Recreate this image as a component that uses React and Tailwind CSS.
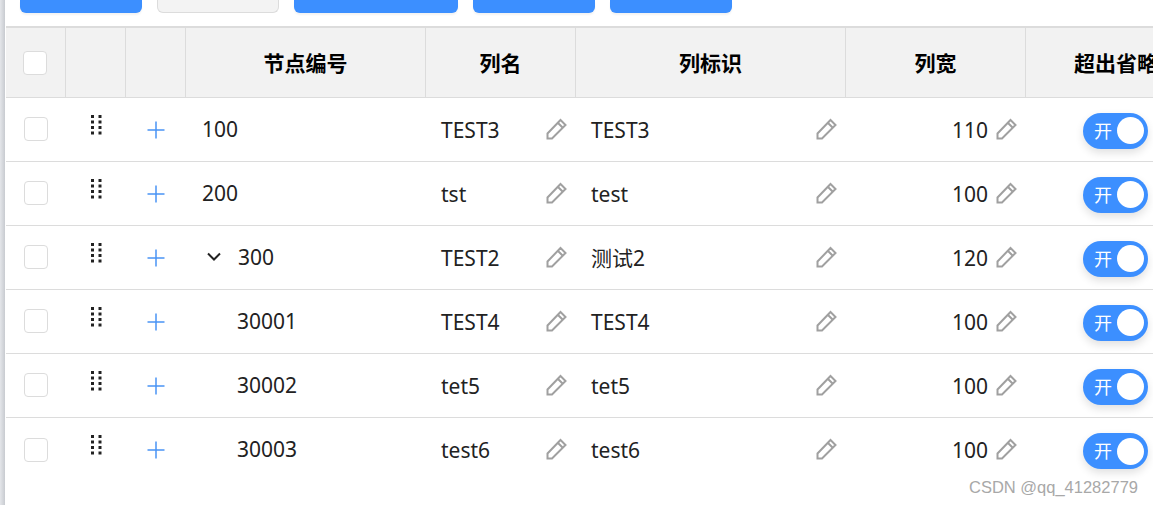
import React from "react";

const fontStack = "font-['Noto_Sans','Noto_Sans_CJK_SC',sans-serif]";

const rows = [
  { id: "100", name: "TEST3", key: "TEST3", width: "110" },
  { id: "200", name: "tst", key: "test", width: "100" },
  { id: "300", name: "TEST2", key: "测试2", width: "120", open: true },
  { id: "30001", name: "TEST4", key: "TEST4", width: "100", child: true },
  { id: "30002", name: "tet5", key: "tet5", width: "100", child: true },
  { id: "30003", name: "test6", key: "test6", width: "100", child: true, last: true },
];

const gridCols = "grid grid-cols-[60px_60px_60px_240px_150px_270px_180px_180px] w-[1200px]";

function Pencil() {
  return (
    <svg width="21" height="22" viewBox="0 0 21 22" fill="none" stroke="#a0a0a0" strokeWidth="2" className="shrink-0 mb-[2px]">
      <path d="M1.5 15.5L14.5 2L19.5 7L6 20.5H1.5Z" />
      <path d="M12 5L16.8 9.8" />
    </svg>
  );
}

function DragDots() {
  return (
    <svg width="12" height="20" viewBox="0 0 12 20" fill="#222">
      {[0, 5.5, 11, 16.5].map((y) => (
        <g key={y}>
          <rect x="1" y={y} width="3" height="3" />
          <rect x="8.5" y={y} width="3" height="3" />
        </g>
      ))}
    </svg>
  );
}

function Plus() {
  return (
    <svg width="18" height="18" viewBox="0 0 18 18" stroke="#4a94f5" strokeWidth="1.5">
      <path d="M0.5 9H17.5M9 0.5V17.5" />
    </svg>
  );
}

function Chevron() {
  return (
    <svg width="16" height="10" viewBox="0 0 16 10" fill="none" stroke="#222" strokeWidth="2">
      <path d="M2 1.5L8 7.5L14 1.5" />
    </svg>
  );
}

function Toggle() {
  return (
    <div className="flex items-center justify-between w-[65px] h-[36px] mt-[2px] rounded-full bg-[#3c8fff] pl-[11px] pr-[4px] shadow-[0_4px_8px_rgba(0,0,0,0.12)]">
      <span className="text-white text-[18px] leading-none">开</span>
      <span className="w-[27px] h-[27px] rounded-full bg-white" />
    </div>
  );
}

function Row({ row }) {
  return (
    <div className={`${gridCols} h-[64px] ${row.last ? "" : "border-b border-[#dcdcdc]"}`}>
      <div className="flex items-center pl-[18px]">
        <div className="w-[24px] h-[24px] mb-[1px] rounded-[4px] border border-[#dcdcdc] bg-white" />
      </div>
      <div className="flex justify-center pt-[17px]">
        <DragDots />
      </div>
      <div className="flex justify-center items-center">
        <Plus />
      </div>
      <div className="flex items-center pl-[16px] text-[21px] text-[#222]">
        {row.open && (
          <span className="ml-[4px] mr-[16px] mb-[2px] flex">
            <Chevron />
          </span>
        )}
        <span className={row.child ? "ml-[35px]" : ""}>{row.id}</span>
      </div>
      <div className="flex items-center justify-between pl-[15px] pr-[9px] text-[21px] text-[#222]">
        <span className="mt-[2px]">{row.name}</span>
        <Pencil />
      </div>
      <div className="flex items-center justify-between pl-[15px] pr-[9px] text-[21px] text-[#222]">
        <span className="mt-[2px]">{row.key}</span>
        <Pencil />
      </div>
      <div className="flex items-center justify-end gap-[8px] pr-[9px] text-[21px] text-[#222]">
        <span className="mt-[2px]">{row.width}</span>
        <Pencil />
      </div>
      <div className="flex items-center pl-[57px]">
        <Toggle />
      </div>
    </div>
  );
}

export default function App() {
  const headers = ["", "", "", "节点编号", "列名", "列标识", "列宽", "超出省略"];

  return (
    <div className={`relative flex w-[1153px] h-[505px] overflow-hidden bg-white ${fontStack}`}>
      <div className="w-[5px] shrink-0 bg-gradient-to-r from-[#e4e6ea] to-[#c8cbd0]" />
      <div className="flex-1 min-w-0 flex flex-col">
        <div className="flex items-start gap-[15px] h-[26px] pl-[15px] shrink-0">
          <div className="w-[122px] h-[13px] rounded-b-[6px] bg-[#3c8fff] shadow-[0_2px_2px_rgba(0,0,0,0.05)]" />
          <div className="w-[122px] h-[13px] rounded-b-[6px] bg-[#f3f3f3] border border-t-0 border-[#dcdcdc]" />
          <div className="w-[164px] h-[13px] rounded-b-[6px] bg-[#3c8fff] shadow-[0_2px_2px_rgba(0,0,0,0.05)]" />
          <div className="w-[122px] h-[13px] rounded-b-[6px] bg-[#3c8fff] shadow-[0_2px_2px_rgba(0,0,0,0.05)]" />
          <div className="w-[122px] h-[13px] rounded-b-[6px] bg-[#3c8fff] shadow-[0_2px_2px_rgba(0,0,0,0.05)]" />
        </div>
        <div className="pl-[1px] flex flex-col">
          <div className={`${gridCols} h-[72px] shrink-0 bg-[#f2f2f2] border-t-2 border-b border-t-[#dcdcdc] border-b-[#dcdcdc]`}>
            {headers.map((title, i) => (
              <div
                key={i}
                className={`flex items-center justify-center text-[21px] font-bold text-black whitespace-nowrap pt-[3px] ${i < 7 ? "border-r border-[#dcdcdc]" : ""}`}
              >
                {i === 0 ? (
                  <div className="w-[24px] h-[24px] mb-[3px] rounded-[4px] border border-[#dcdcdc] bg-white mr-[2px]" />
                ) : (
                  title
                )}
              </div>
            ))}
          </div>
          {rows.map((row) => (
            <Row key={row.id} row={row} />
          ))}
        </div>
      </div>
      <div className="absolute right-[15px] bottom-[8px] font-['Liberation_Sans',sans-serif] text-[16.5px] leading-[20px] text-[#a8a8a8]">
        CSDN @qq_41282779
      </div>
    </div>
  );
}
